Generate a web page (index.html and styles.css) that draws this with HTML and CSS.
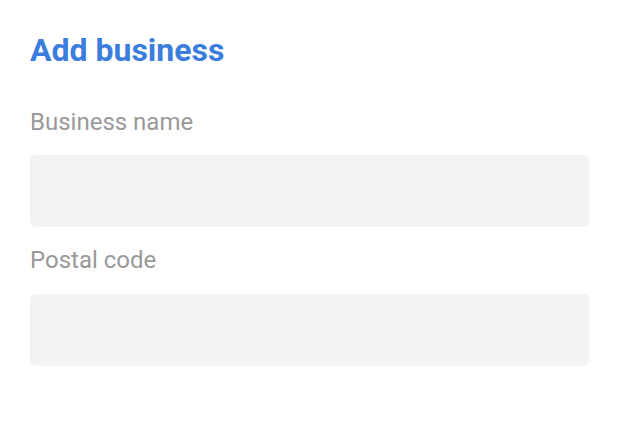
FILE: index.html
```html
<!DOCTYPE html>
<html>
<head>
<meta charset="utf-8">
<link rel="stylesheet" href="styles.css">
</head>
<body>
<div class="form">
  <h1 class="title">Add business</h1>
  <label class="label label-first">Business name</label>
  <div class="input"></div>
  <label class="label">Postal code</label>
  <div class="input input-last"></div>
</div>
</body>
</html>
```
FILE: styles.css
```css
html, body { margin: 0; padding: 0; background: #fff; }
body { font-family: Roboto, "Liberation Sans", sans-serif; }
.form { display: flex; flex-direction: column; padding: 30px 37px 0 30px; }
.title { margin: 0; font-size: 32px; font-weight: 700; color: #3b7ddd; line-height: 40px; }
.label { font-size: 24px; color: #999; line-height: 30px; margin-top: 18px; }
.label-first { margin-top: 37px; }
.input { height: 72px; background: #f3f3f3; border-radius: 6px; margin-top: 18px; }
.input-last { margin-top: 19px; }
```
